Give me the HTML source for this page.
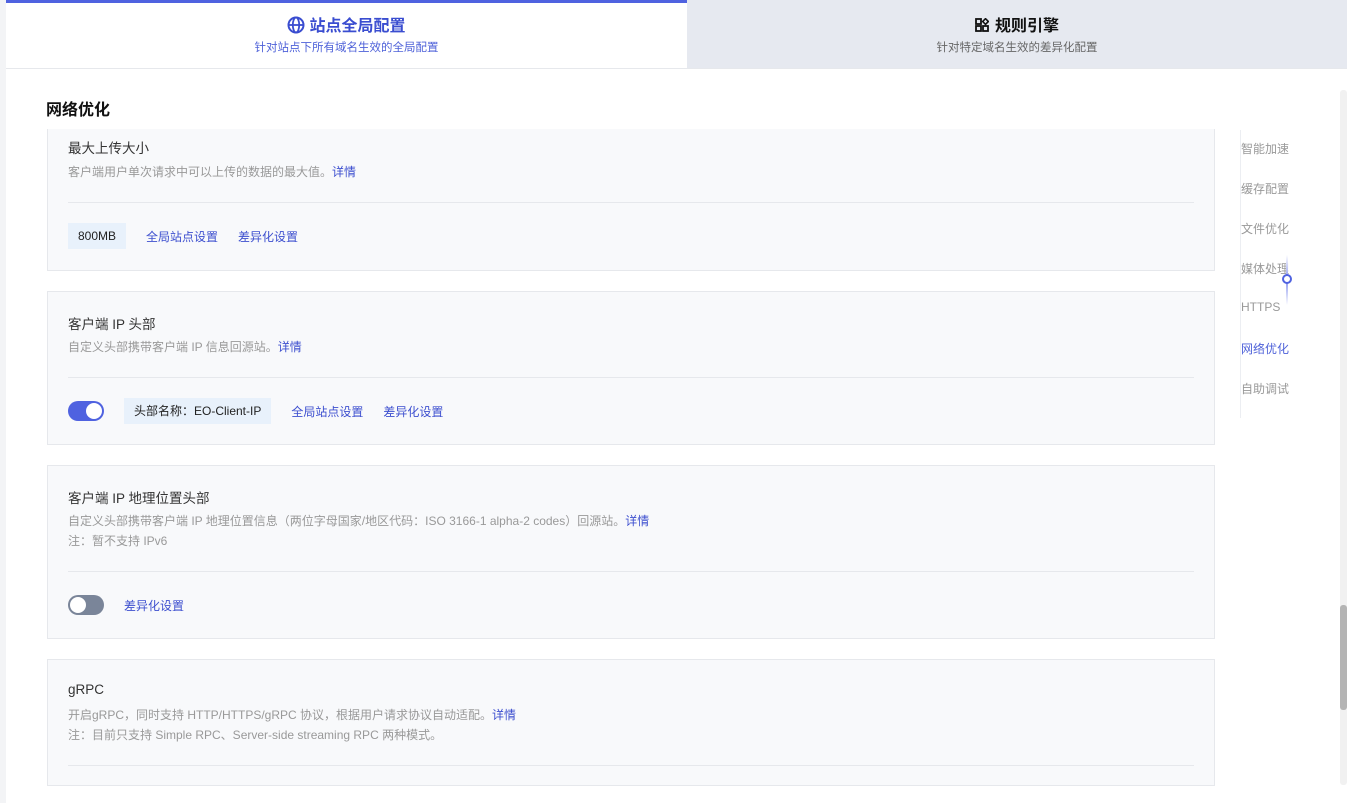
<!DOCTYPE html>
<html><head><meta charset="utf-8"><style>
*{margin:0;padding:0;box-sizing:border-box}
body{width:1347px;height:803px;overflow:hidden;background:#fff;font-family:"Liberation Sans","Noto Sans CJK SC",sans-serif;position:relative;color:#222}
.abs{position:absolute}
.tabL{left:6px;top:0;width:681px;height:68px;background:#fff;border-top:3px solid #4f62e0;text-align:center}
.tabR{left:687px;top:0;width:660px;height:68px;background:#e6e9f0;text-align:center}
.tt{font-size:16px;font-weight:bold;margin-top:16px;line-height:22px}
.ts{font-size:11.5px;line-height:16px;margin-top:2px}
.card{left:47px;width:1168px;background:#f8f9fb;border:1px solid #e6e8ec}
.h{position:absolute;left:20px;font-size:13.5px;color:#333}
.d{position:absolute;left:20px;font-size:12px;color:#999;line-height:20px}
.d a,.lk{color:#3d4fcf;text-decoration:none}
.line{position:absolute;left:20px;right:20px;height:1px;background:#e6e8ec}
.row{position:absolute;left:20px;display:flex;align-items:center;font-size:12px}
.tag{background:#e8f1fb;color:#222;padding:0 10px;height:26px;line-height:26px}
.lk{margin-left:20px;font-size:12px}
.sw{width:36px;height:20px;border-radius:10px;position:relative}
.sw i{position:absolute;top:2px;width:16px;height:16px;border-radius:50%;background:#fff}
.nav{left:1241px;font-size:12px;color:#999}
</style></head><body>
<div class="abs" style="left:0;top:0;width:6px;height:803px;background:#f3f4f6"></div>
<div class="abs tabL"><div class="tt" style="color:#3a4dd0;margin-top:13px"><svg width="18" height="18" viewBox="0 0 18 18" style="vertical-align:-3px;margin-right:4px"><circle cx="9" cy="9" r="7.5" fill="none" stroke="#3a4dd0" stroke-width="2"/><ellipse cx="9" cy="9" rx="3.2" ry="7.5" fill="none" stroke="#3a4dd0" stroke-width="1.8"/><path d="M1.5 9H16.5" stroke="#3a4dd0" stroke-width="1.8"/></svg>站点全局配置</div><div class="ts" style="color:#4f62d9">针对站点下所有域名生效的全局配置</div></div>
<div class="abs tabR"><div class="tt" style="color:#111"><svg width="14" height="14" viewBox="0 0 14 14" style="vertical-align:-1px;margin-right:6px"><rect x="1" y="1" width="5" height="5" fill="none" stroke="#111" stroke-width="1.8"/><rect x="1" y="8" width="5" height="5" fill="none" stroke="#111" stroke-width="1.8"/><rect x="8" y="8" width="5" height="5" fill="none" stroke="#111" stroke-width="1.8"/><rect x="8.5" y="1.5" width="4" height="4" transform="rotate(45 10.5 3.5)" fill="none" stroke="#111" stroke-width="1.6"/></svg>规则引擎</div><div class="ts" style="color:#666">针对特定域名生效的差异化配置</div></div>
<div class="abs" style="left:6px;top:68px;width:1341px;height:1px;background:#e6e8ec"></div>
<div class="abs" style="left:46px;top:96px;font-size:16px;font-weight:bold;color:#111">网络优化</div>

<div class="abs card" style="top:129px;height:142px;border-top:none">
<div class="h" style="top:8px">最大上传大小</div>
<div class="d" style="top:33px">客户端用户单次请求中可以上传的数据的最大值。<a>详情</a></div>
<div class="line" style="top:73px"></div>
<div class="row" style="top:94px"><span class="tag">800MB</span><span class="lk">全局站点设置</span><span class="lk">差异化设置</span></div>
</div>

<div class="abs card" style="top:291px;height:154px">
<div class="h" style="top:21px">客户端 IP 头部</div>
<div class="d" style="top:45px">自定义头部携带客户端 IP 信息回源站。<a>详情</a></div>
<div class="line" style="top:85px"></div>
<div class="row" style="top:106px"><span class="sw" style="background:#4f62e0"><i style="right:2px"></i></span><span class="tag" style="margin-left:20px">头部名称：EO-Client-IP</span><span class="lk">全局站点设置</span><span class="lk">差异化设置</span></div>
</div>

<div class="abs card" style="top:465px;height:174px">
<div class="h" style="top:21px">客户端 IP 地理位置头部</div>
<div class="d" style="top:45px">自定义头部携带客户端 IP 地理位置信息（两位字母国家/地区代码：ISO 3166-1 alpha-2 codes）回源站。<a>详情</a><br>注：暂不支持 IPv6</div>
<div class="line" style="top:105px"></div>
<div class="row" style="top:129px"><span class="sw" style="background:#7a8599"><i style="left:2px"></i></span><span class="lk">差异化设置</span></div>
</div>

<div class="abs card" style="top:659px;height:127px">
<div class="h" style="top:22px">gRPC</div>
<div class="d" style="top:45px">开启gRPC，同时支持 HTTP/HTTPS/gRPC 协议，根据用户请求协议自动适配。<a>详情</a><br>注：目前只支持 Simple RPC、Server-side streaming RPC 两种模式。</div>
<div class="line" style="top:105px"></div>
</div>

<div class="abs" style="left:1240px;top:130px;width:1px;height:288px;background:#eceef2"></div>
<div class="abs nav" style="top:140px">智能加速</div>
<div class="abs nav" style="top:180px">缓存配置</div>
<div class="abs nav" style="top:220px">文件优化</div>
<div class="abs nav" style="top:260px">媒体处理</div>
<div class="abs nav" style="top:300px">HTTPS</div>
<div class="abs nav" style="top:340px;color:#4f62d9">网络优化</div>
<div class="abs nav" style="top:380px">自助调试</div>
<div class="abs" style="left:1286px;top:255px;width:2px;height:50px;background:linear-gradient(#fff,#8a96ee,#fff)"></div>
<div class="abs" style="left:1282px;top:274px;width:10px;height:10px;border-radius:50%;border:2px solid #4f62e0;background:#fff"></div>

<div class="abs" style="left:1340px;top:90px;width:7px;height:695px;background:#f1f1f1;border-radius:3px"></div>
<div class="abs" style="left:1340px;top:605px;width:7px;height:105px;background:#b4b4b4;border-radius:3px"></div>
</body></html>
